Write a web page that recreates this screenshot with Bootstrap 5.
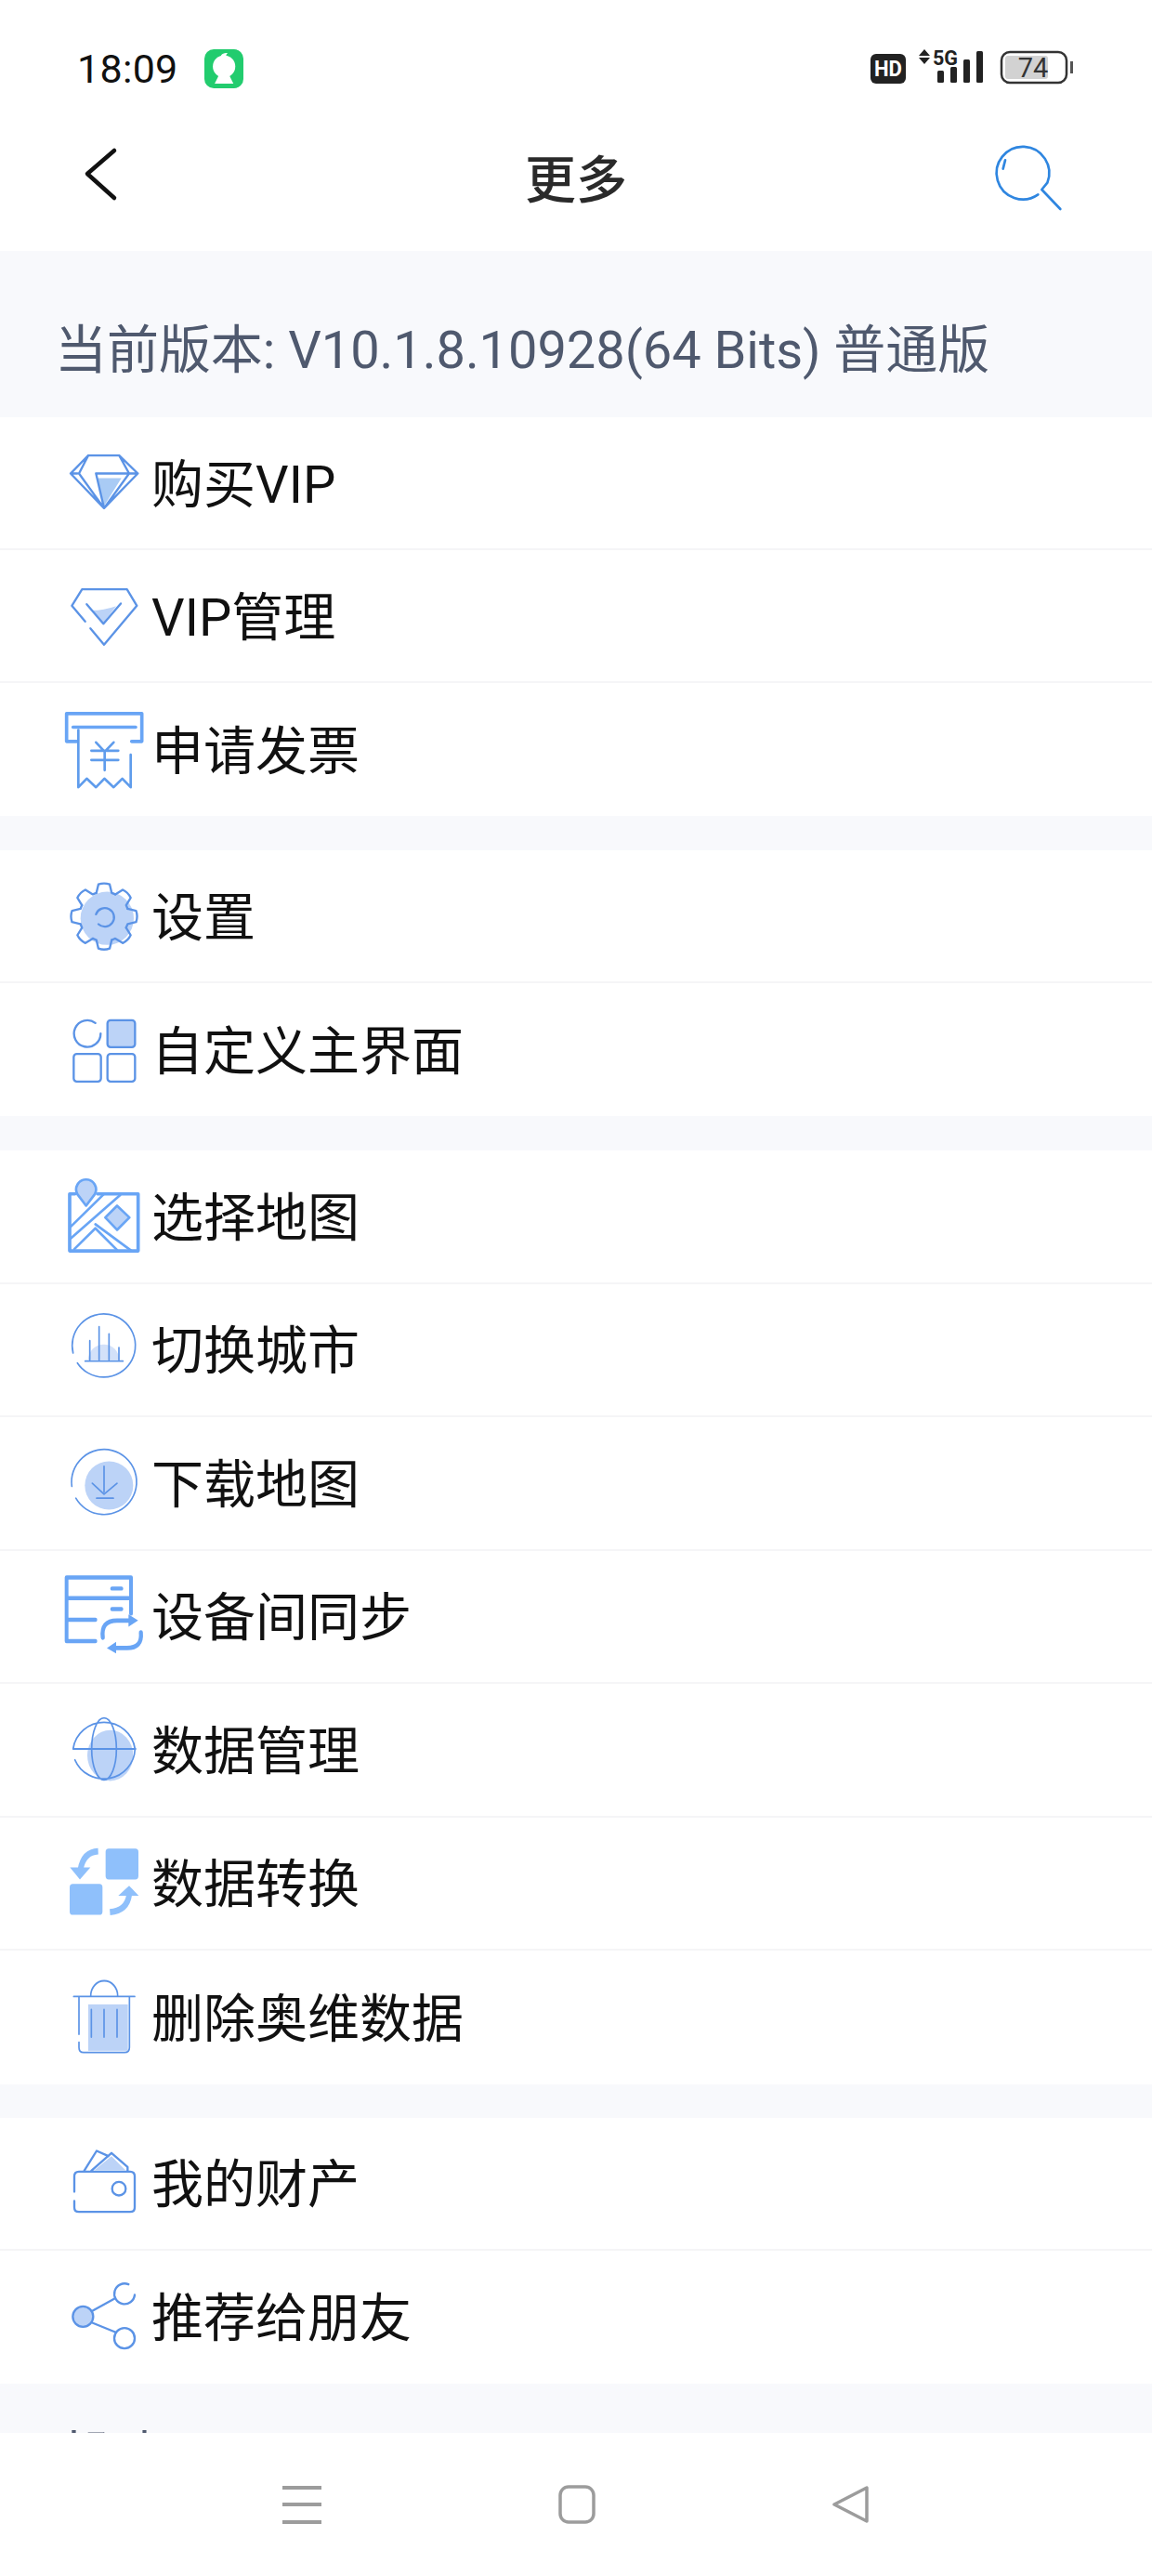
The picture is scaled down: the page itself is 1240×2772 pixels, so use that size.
<!DOCTYPE html>
<html lang="zh-CN">
<head>
  <meta charset="UTF-8" />
  <meta name="viewport" content="width=device-width, initial-scale=1" />
  <title>更多</title>
  <link href="https://cdn.jsdelivr.net/npm/bootstrap@5.3.3/dist/css/bootstrap.min.css" rel="stylesheet" />
  <style>
  body { font-family: Roboto, "Noto Sans CJK SC", sans-serif; color: #111; background: #fff; }
  .phone-page { height: 2772px; }
  .status-strip { height: 125px; padding: 53px 84px 0 83px; }
  .status-time { font-size: 43px; line-height: 42px; color: #111; letter-spacing: .3px; }
  .app-badge { margin-left: 28px; }
  .title-strip { height: 145px; padding: 15px 82px 0 60px; }
  .title-text { font-size: 55px; line-height: 80px; padding: 14px 0 0 22px; color: #2a2a2a; font-weight: 500; }
  .soft-band { background: #f8f9fc; color: #4f596e; font-size: 56px; line-height: 80px; }
  .ver-band { height: 179px; padding: 67px 0 0 59px; letter-spacing: -.05px; }
  .help-band { padding: 38px 0 0 62px; }
  .group-gap { height: 37px; background: #f8f9fc; }
  .group-gap.short-gap { height: 36px; }
  .menu-list { --bs-list-group-border-color: #f5f5f7; --bs-list-group-border-width: 2px; }
  .menu-row { height: 143px; padding: 4px 0 0 60px; font-size: 56px; line-height: 80px; color: #111; }
  .tall-rows .menu-row { height: 143.5px; }
  .row-ico { width: 100px; height: 100px; margin: -4px 3px 0 0; flex: none; }
  .row-ico .ln { fill: none; stroke: #5b93e6; stroke-width: 7; stroke-linecap: round; stroke-linejoin: round; }
  .row-ico .ln.thin { stroke-width: 5; }
  .row-ico .hv { fill: none; stroke: #69a5f5; stroke-width: 11; stroke-linecap: round; stroke-linejoin: round; }
  .row-ico .sf { fill: #bcd3f7; }
  .row-ico .sb { fill: #8fc0fb; }
  .row-ico .sb-line { fill: none; stroke: #8fc0fb; stroke-width: 18; }
  .bottom-nav { height: 154px; padding-top: 56px; gap: 255px; background: #fff; }
  .bottom-nav svg { fill: none; stroke: #9c9c9c; }
  </style>
</head>
<body>
<div class="phone-page d-flex flex-column overflow-hidden">

  <!-- status bar -->
  <div class="status-strip d-flex justify-content-between align-items-start flex-shrink-0">
    <div class="d-flex align-items-start">
      <span class="status-time">18:09</span>
      <svg class="app-badge" width="42" height="42" viewBox="65 40 125 125">
        <rect x="65" y="40" width="125" height="125" rx="30" fill="#22cc6e"/>
        <circle cx="128" cy="95" r="36" fill="#fff"/>
        <path d="M118 60 Q125 50 140 52 Q132 58 135 66 Z" fill="#fff"/>
        <path d="M112 122 L98 150 H158 L144 122 Z" fill="#fff"/>
      </svg>
    </div>
    <svg width="219" height="40" viewBox="937 55 219 40">
      <rect x="937" y="60" width="38" height="32" rx="6" fill="#222"/>
      <text x="956" y="84" text-anchor="middle" font-family="Roboto" font-weight="700" font-size="23" fill="#fff" textLength="30" lengthAdjust="spacingAndGlyphs">HD</text>
      <path d="M995 55 L1001 62 H989 Z M995 71 L1001 64 H989 Z" fill="#222"/>
      <text x="1004" y="72" font-family="Roboto" font-weight="700" font-size="22" fill="#222" textLength="27" lengthAdjust="spacingAndGlyphs">5G</text>
      <rect x="1009" y="78" width="7" height="13" rx="1.5" fill="#222"/>
      <rect x="1023" y="74" width="7" height="17" rx="1.5" fill="#222"/>
      <rect x="1037" y="66" width="7" height="25" rx="1.5" fill="#222"/>
      <rect x="1051" y="57" width="7" height="34" rx="1.5" fill="#222"/>
      <rect x="1078" y="58" width="70" height="33" rx="9" fill="none" stroke="#333" stroke-width="2.5"/>
      <rect x="1082" y="62" width="46" height="25" rx="3" fill="#d2d2d2"/>
      <text x="1112" y="85" text-anchor="middle" font-family="Roboto" font-size="29" fill="#333">74</text>
      <rect x="1152" y="68" width="3" height="13" fill="#555"/>
    </svg>
  </div>

  <!-- title bar -->
  <div class="title-strip d-flex align-items-start flex-shrink-0">
    <svg width="100" height="100" viewBox="0 0 100 100"><path d="M63 22 L34 47 L63 73" fill="none" stroke="#111" stroke-width="4.5" stroke-linecap="round" stroke-linejoin="round"/></svg>
    <div class="title-text flex-grow-1 text-center">更多</div>
    <svg width="100" height="100" viewBox="0 0 300 300">
      <path d="M178 208 A85 85 0 1 1 208 170 L190 192 L250 255 M72 97 L65 125" fill="none" stroke="#2f86e0" stroke-width="8" stroke-linecap="round" stroke-linejoin="round"/>
    </svg>
  </div>

  <!-- scrolling content, cut by the bottom nav -->
  <div class="flex-grow-1 overflow-hidden">
    <div class="soft-band ver-band">当前版本: V10.1.8.10928(64 Bits) 普通版</div>

    <div class="list-group list-group-flush menu-list">
      <div class="list-group-item d-flex align-items-center menu-row">
        <svg class="row-ico" viewBox="60 31.5 300 300">
          <path d="M195 165 H272 L216 255 Z" fill="#a9cbf5"/>
          <path class="ln" d="M165 92 H265 L325 150 L216 262 L108 150 Z M165 92 L135 150 L216 262 L297 150 L265 92 M108 150 H130 M190 150 H325 M190 150 L216 262"/>
        </svg>购买VIP
      </div>
      <div class="list-group-item d-flex align-items-center menu-row">
        <svg class="row-ico" viewBox="60 460.5 300 300">
          <path class="sf" d="M175 592 Q215 592 255 578 L214 632 Z"/>
          <path class="ln" d="M155 628 L112 577 L145 524 H290 L322 577 L216 703 L172 650 M160 572 L214 635 L270 570"/>
        </svg>VIP管理
      </div>
      <div class="list-group-item d-flex align-items-center menu-row">
        <svg class="row-ico" viewBox="60 889.5 300 300">
          <path class="hv" d="M95 1012 V922 H338 V1012 H305 M95 1012 H128 M116 966 H318"/>
          <path class="ln" style="stroke:#5f9cec;stroke-width:8" d="M133 975 V1160 L160 1132 L190 1160 L217 1132 L247 1160 L275 1132 L302 1160 V1055 M190 1015 L218 1045 L247 1015 M175 1042 H262 M175 1072 H262 M218 1045 V1105"/>
        </svg>申请发票
      </div>
    </div>

    <div class="group-gap"></div>

    <div class="list-group list-group-flush menu-list">
      <div class="list-group-item d-flex align-items-center menu-row">
        <svg class="row-ico" viewBox="60 46.5 300 300">
          <defs><path id="gearTooth" d="M-24.7 -76.1 L-18.2 -103.4 Q0 -110 18.2 -103.4 L24.7 -76.1 L36.3 -71.3"/></defs>
          <circle class="sf" cx="226" cy="203" r="86"/>
          <g class="ln" transform="translate(216 197)">
            <use href="#gearTooth"/>
            <use href="#gearTooth" transform="rotate(45)"/>
            <use href="#gearTooth" transform="rotate(90)"/>
            <use href="#gearTooth" transform="rotate(135)"/>
            <use href="#gearTooth" transform="rotate(180)"/>
            <use href="#gearTooth" transform="rotate(225)"/>
            <use href="#gearTooth" transform="rotate(270)"/>
            <use href="#gearTooth" transform="rotate(315)"/>
          </g>
          <path class="ln" d="M190 190 A30 30 0 1 1 198 222"/>
        </svg>设置
      </div>
      <div class="list-group-item d-flex align-items-center menu-row">
        <svg class="row-ico" viewBox="60 475.5 300 300">
          <rect class="sf" x="228" y="530" width="88" height="86" rx="8"/>
          <path class="ln" d="M188 538 A43 43 0 1 0 205 572"/>
          <rect class="ln" x="227" y="529" width="89" height="87" rx="10"/>
          <rect class="ln" x="118" y="638" width="88" height="89" rx="10"/>
          <rect class="ln" x="227" y="638" width="89" height="89" rx="10"/>
        </svg>自定义主界面
      </div>
    </div>

    <div class="group-gap"></div>

    <div class="list-group list-group-flush menu-list tall-rows">
      <div class="list-group-item d-flex align-items-center menu-row">
        <svg class="row-ico" viewBox="60 56.7 300 300">
          <path class="sf" d="M258 172 L298 210 L258 250 L220 210 Z"/>
          <path class="hv" style="stroke-width:8" d="M108 240 L215 135 M108 278 L268 138 M120 312 L188 245 L258 315 M188 232 L305 318 M258 172 L298 210 L258 250 L220 210 Z"/>
          <path class="hv" d="M195 134 H326 V318 H105 V134 H122"/>
          <path class="sf" style="stroke:#69a5f5;stroke-width:8;stroke-linejoin:round" d="M158 172 L130 135 A32 32 0 1 1 186 135 Z"/>
        </svg>选择地图
      </div>
      <div class="list-group-item d-flex align-items-center menu-row">
        <svg class="row-ico" viewBox="60 488 300 300">
          <path class="sf" style="fill:#d3e1f9" d="M165 672 A50 50 0 0 1 265 672 Z"/>
          <path class="ln thin" d="M116 650 A102 102 0 1 1 130 682 M170 610 V672 M200 565 V672 M232 588 V672 M264 632 V672 M155 676 H277"/>
        </svg>切换城市
      </div>
      <div class="list-group-item d-flex align-items-center menu-row">
        <svg class="row-ico" viewBox="60 919.5 300 300">
          <circle class="sf" cx="232" cy="1077" r="78"/>
          <path class="ln thin" d="M112 1080 A105 105 0 1 1 125 1118 M216 1015 V1098 M178 1070 L216 1105 L258 1070 M192 1118 H246"/>
        </svg>下载地图
      </div>
      <div class="list-group-item d-flex align-items-center menu-row">
        <svg class="row-ico" viewBox="60 81.9 300 270.3" preserveAspectRatio="none">
          <path class="hv" style="stroke-width:12" d="M188 290 H95 V105 H303 V210 M95 165 H303 M95 228 H188 M242 137 H272 M242 197 H272"/>
          <path class="hv" style="stroke-width:13" d="M212 280 Q205 230 258 230 H296 M335 265 Q340 310 290 310 H252"/>
          <path d="M295 212 L326 230 L295 248 Z M255 292 L225 310 L255 326 Z" fill="#69a5f5"/>
        </svg>设备间同步
      </div>
      <div class="list-group-item d-flex align-items-center menu-row">
        <svg class="row-ico" viewBox="60 470.6 300 270.3" preserveAspectRatio="none">
          <circle class="sf" cx="236" cy="622" r="74"/>
          <path class="ln thin" d="M116 603 A101 90 0 0 1 316 603 A101 90 0 0 1 122 635 M116 603 H318 M216 513 A40 90 0 0 1 216 693 A40 90 0 0 1 216 513"/>
        </svg>数据管理
      </div>
      <div class="list-group-item d-flex align-items-center menu-row">
        <svg class="row-ico" viewBox="60 859.3 300 270.3" preserveAspectRatio="none">
          <rect class="sb" x="221" y="895" width="106" height="90" rx="10"/>
          <rect class="sb" x="105" y="998" width="106" height="90" rx="10"/>
          <path class="sb-line" d="M197 903 Q150 905 140 955"/>
          <path class="sb" d="M106 950 H172 L138 985 Z"/>
          <path class="sb-line" d="M235 1080 Q290 1075 297 1030"/>
          <path class="sb" d="M262 1032 H328 L297 1003 Z"/>
        </svg>数据转换
      </div>
      <div class="list-group-item d-flex align-items-center menu-row">
        <svg class="row-ico" viewBox="60 1248 300 270.3" preserveAspectRatio="none">
          <rect class="sf" x="165" y="1345" width="128" height="135"/>
          <path class="ln thin" d="M118 1322 H315 M173 1320 A43 43 0 0 1 260 1320 M135 1322 V1432 M135 1455 V1470 Q135 1485 150 1485 H282 Q298 1485 298 1470 V1322 M175 1360 V1440 M216 1360 V1440 M258 1360 V1440"/>
        </svg>删除奥维数据
      </div>
    </div>

    <div class="group-gap short-gap"></div>

    <div class="list-group list-group-flush menu-list">
      <div class="list-group-item d-flex align-items-center menu-row">
        <svg class="row-ico" viewBox="0 1.5 300 300">
          <path class="sf" d="M125 110 L180 65 L225 110 Z"/>
          <path class="ln" d="M60 180 V130 Q60 115 75 115 H240 Q255 115 255 130 V230 Q255 245 240 245 H75 Q60 245 60 230 V210 M92 112 L132 48 L170 65 M115 112 L180 55 L232 100 V112"/>
          <circle class="ln" cx="204" cy="170" r="22"/>
        </svg>我的财产
      </div>
      <div class="list-group-item d-flex align-items-center menu-row">
        <svg class="row-ico" viewBox="0 430.5 300 300">
          <circle class="sf" cx="88" cy="580" r="33"/>
          <circle class="ln" cx="88" cy="580" r="33"/>
          <path class="ln" d="M235 476 A33 33 0 1 0 255 510"/>
          <circle class="ln" cx="222" cy="650" r="33"/>
          <path class="ln" d="M118 562 L190 522 M118 600 L192 630"/>
        </svg>推荐给朋友
      </div>
    </div>

    <div class="soft-band help-band h-100">帮助</div>
  </div>

  <!-- android nav -->
  <div class="bottom-nav d-flex justify-content-center flex-shrink-0">
    <svg width="42" height="42" viewBox="0 0 42 42" stroke-width="4"><path d="M0 3 H42 M0 21 H42 M0 40 H42"/></svg>
    <svg width="40" height="42" viewBox="0 0 40 42" stroke-width="3.5"><rect x="2" y="2" width="36" height="38" rx="9"/></svg>
    <svg width="40" height="42" viewBox="0 0 40 42" stroke-width="3.5" stroke-linejoin="round"><path d="M2 21 L37 3 V39 Z"/></svg>
  </div>
</div>
<script src="https://cdn.jsdelivr.net/npm/bootstrap@5.3.3/dist/js/bootstrap.bundle.min.js"></script>
</body>
</html>
